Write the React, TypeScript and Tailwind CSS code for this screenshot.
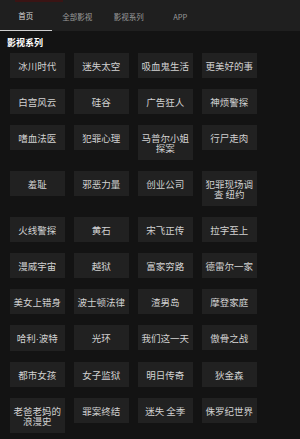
const TABS = ["首页", "全部影视", "影视系列", "APP"];

const SERIES = [
  "冰川时代", "迷失太空", "吸血鬼生活", "更美好的事",
  "白宫风云", "硅谷", "广告狂人", "神烦警探",
  "嗜血法医", "犯罪心理", "马普尔小姐探案", "行尸走肉",
  "羞耻", "邪恶力量", "创业公司", "犯罪现场调查 纽约",
  "火线警探", "黄石", "宋飞正传", "拉字至上",
  "漫威宇宙", "越狱", "富家穷路", "德雷尔一家",
  "美女上错身", "波士顿法律", "渣男岛", "摩登家庭",
  "哈利·波特", "光环", "我们这一天", "傲骨之战",
  "都市女孩", "女子监狱", "明日传奇", "狄金森",
  "老爸老妈的浪漫史", "罪案终结", "迷失 全季", "侏罗纪世界",
];

// the middle dot renders full width in the CJK font, so give it a latin one
function Name({ name }: { name: string }) {
  if (!name.includes("·")) return <>{name}</>;
  const [a, b] = name.split("·");
  return (
    <>
      {a}
      <span style={{ fontFamily: '"Liberation Sans", sans-serif' }}>·</span>
      {b}
    </>
  );
}

export default function App() {
  return (
    <div
      className="min-h-[439px] bg-[#131313] text-[#dcdcdc]"
      style={{ fontFamily: '"Noto Sans CJK SC", "Noto Sans", sans-serif' }}
    >
      <header className="relative h-[31px] bg-[#1f1f1f] flex items-stretch">
        <div className="absolute top-0 left-[15px] w-[48px] h-[2px] bg-[#3a1414]" />
        {TABS.map((tab, i) => (
          <div
            key={tab}
            className={
              "w-[51.5px] flex items-center justify-center text-[7.5px] pt-[2px] " +
              (i === 0 ? "text-[#d8d8d8] border-b border-[#cfcfcf]" : "text-[#9a9a9a]")
            }
          >
            {tab}
          </div>
        ))}
      </header>

      <h2 className="pl-[7px] pt-[6px] text-[9px] leading-[11px] font-bold text-white">
        影视系列
      </h2>

      <div className="mt-[5px] px-[10px] pb-[8px] grid grid-cols-[repeat(4,54.5px)] gap-x-[9.5px] gap-y-[11px] items-start">
        {SERIES.map((name) => (
          <div
            key={name}
            className="bg-[#212121] px-[2px] py-[7.5px] text-center text-[9.5px] leading-[10px] text-[#d2d2d2]"
          >
            <Name name={name} />
          </div>
        ))}
      </div>
    </div>
  );
}
